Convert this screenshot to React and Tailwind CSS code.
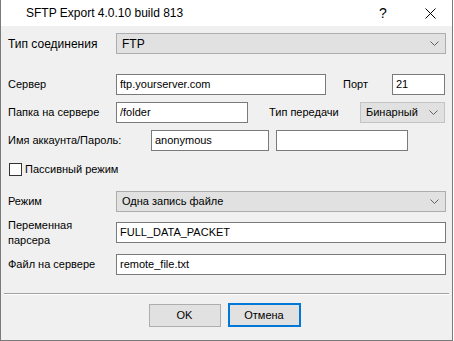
const LABEL_FONT = "font-['Liberation_Sans',Arial,sans-serif]";

function Chevron() {
    return (
        <svg width="9" height="5" viewBox="0 0 9 5" className="shrink-0">
            <path d="M0.5 0.5 L4.5 4.5 L8.5 0.5" fill="none" stroke="#606060" strokeWidth="1" />
        </svg>
    );
}

function TextBox({ value, className = "" }) {
    return (
        <div
            className={`h-[21px] shrink-0 border border-[#7a7a7a] bg-white pl-[3px] flex items-center text-[11px] text-black ${className}`}
        >
            {value}
        </div>
    );
}

function Combo({ value, className = "", border = "border-[#adadad]" }) {
    return (
        <div
            className={`h-[21px] shrink-0 border ${border} bg-[#e1e1e1] pl-[5px] pr-[6px] flex items-center justify-between text-[11px] text-black ${className}`}
        >
            <span>{value}</span>
            <Chevron />
        </div>
    );
}

function Label({ children, className = "" }) {
    return <div className={`shrink-0 text-[11px] text-black ${className}`}>{children}</div>;
}

export default function App() {
    return (
        <div className={`w-[454px] h-[341px] bg-white ${LABEL_FONT}`}>
            <div className="w-[453px] h-[341px] flex flex-col border-l border-r border-b border-[#7a7a7a] bg-[#f0f0f0]">
                {/* title bar */}
                <div className="h-[26px] shrink-0 bg-white flex items-center">
                    <span className="pl-[25px] text-[12px] text-black">SFTP Export 4.0.10 build 813</span>
                    <span className="ml-auto w-[10px] text-center text-[14px] text-black">?</span>
                    <svg width="11" height="11" viewBox="0 0 11 11" className="ml-[37px] mr-[16px]">
                        <path d="M0.5 0.5 L10.5 10.5 M10.5 0.5 L0.5 10.5" stroke="#000" strokeWidth="1" />
                    </svg>
                </div>

                <div className="flex flex-col pl-[7px]">
                    {/* connection type */}
                    <div className="mt-[7px] flex items-center h-[21px]">
                        <Label className="w-[108px] text-[12px]">Тип соединения</Label>
                        <Combo value="FTP" className="w-[330px] text-[12px]" />
                    </div>

                    {/* server / port */}
                    <div className="mt-[20px] flex items-center h-[21px]">
                        <Label className="w-[108px]">Сервер</Label>
                        <TextBox value="ftp.yourserver.com" className="w-[210px]" />
                        <Label className="ml-[17px] w-[49px]">Порт</Label>
                        <TextBox value="21" className="w-[53px]" />
                    </div>

                    {/* folder / transfer type */}
                    <div className="mt-[7px] flex items-center h-[21px]">
                        <Label className="w-[108px]">Папка на сервере</Label>
                        <TextBox value="/folder" className="w-[132px]" />
                        <Label className="ml-[21px] w-[91px]">Тип передачи</Label>
                        <Combo value="Бинарный" className="w-[85px]" border="border-[#c4c4c4]" />
                    </div>

                    {/* account / password */}
                    <div className="mt-[7px] flex items-center h-[21px]">
                        <Label className="w-[143px]">Имя аккаунта/Пароль:</Label>
                        <TextBox value="anonymous" className="w-[118px]" />
                        <TextBox value="" className="ml-[7px] w-[132px]" />
                    </div>

                    {/* passive mode */}
                    <div className="mt-[12px] flex items-center h-[13px]">
                        <div className="ml-[1px] w-[13px] h-[13px] border border-[#333333] bg-white shrink-0" />
                        <Label className="ml-[3px]">Пассивный режим</Label>
                    </div>

                    {/* mode */}
                    <div className="mt-[15px] flex items-center h-[21px]">
                        <Label className="w-[108px]">Режим</Label>
                        <Combo value="Одна запись файле" className="w-[330px]" />
                    </div>

                    {/* parser variable */}
                    <div className="mt-[10px] flex items-center h-[21px]">
                        <Label className="w-[108px] leading-[15px]">
                            Переменная
                            <br />
                            парсера
                        </Label>
                        <TextBox value="FULL_DATA_PACKET" className="w-[330px]" />
                    </div>

                    {/* remote file */}
                    <div className="mt-[11px] flex items-center h-[21px]">
                        <Label className="w-[108px]">Файл на сервере</Label>
                        <TextBox value="remote_file.txt" className="w-[330px]" />
                    </div>
                </div>

                {/* separator */}
                <div className="mt-[18px] mx-[3px] h-[2px] border-t border-[#a0a0a0] border-b border-b-white" />

                {/* buttons */}
                <div className="mt-[9px] flex justify-center gap-[7px] pr-[4px]">
                    <button className="w-[72px] h-[23px] border border-[#adadad] bg-[#e1e1e1] text-[11px] text-black">
                        OK
                    </button>
                    <button className="w-[73px] h-[24px] -mt-[1px] border-2 border-[#0078d7] bg-[#e1e1e1] text-[11px] text-black">
                        Отмена
                    </button>
                </div>
            </div>
        </div>
    );
}
